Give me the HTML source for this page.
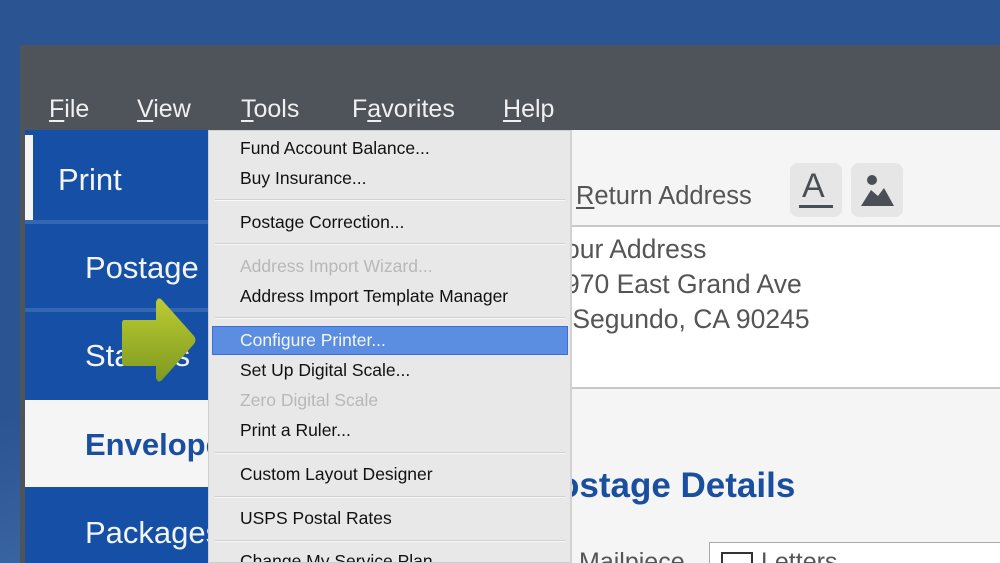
<!DOCTYPE html>
<html><head><style>
*{margin:0;padding:0;box-sizing:border-box}
html,body{width:1000px;height:563px;overflow:hidden}
body{position:relative;font-family:"Liberation Sans",sans-serif;background:linear-gradient(160deg,#2a5492 0%,#2a5492 45%,#5a8ac4 100%)}
.win{position:absolute;left:20px;top:45px;width:980px;height:518px;background:#4f545a}
.menu span{position:absolute;top:95px;color:#f0f0f0;font-size:25px}
.side{position:absolute;left:25px;top:130px;width:184px;height:433px;background:#1650a6;overflow:hidden}
.si{position:absolute;left:0;color:#f2f4f8;font-size:31px;white-space:nowrap}
.sep{position:absolute;left:0;width:184px;height:4px;background:#3367b2}
.content{position:absolute;left:570px;top:130px;width:430px;height:433px;background:#f5f5f5;border-left:1px solid #ccc;overflow:hidden}
.dd{position:absolute;left:208px;top:130px;width:364px;height:433px;background:#e8e8e8;border:1px solid #cfcfcf;border-right:2px solid #d2d2d2;overflow:hidden}
.it{position:absolute;left:31px;font-size:17.5px;color:#111;white-space:nowrap}
.dis{color:#b8b8b8}
.hr{position:absolute;left:6px;width:350px;height:2px;background:#d0d0d0;border-bottom:1px solid #f8f8f8}
u{text-decoration:underline;text-underline-offset:3px}
</style></head><body>
<div class="win"></div>
<div class="menu">
<span style="left:49px"><u>F</u>ile</span>
<span style="left:137px"><u>V</u>iew</span>
<span style="left:241px"><u>T</u>ools</span>
<span style="left:352px">F<u>a</u>vorites</span>
<span style="left:503px"><u>H</u>elp</span>
</div>
<div class="side">
<div style="position:absolute;left:0;top:5px;width:8px;height:88px;background:#f5f5f5"></div>
<div class="si" style="left:33px;top:32px">Print</div>
<div class="sep" style="top:90px"></div>
<div class="si" style="left:60px;top:120px">Postage</div>
<div class="sep" style="top:178px"></div>
<div class="si" style="left:60px;top:208px">Stamps</div>
<div style="position:absolute;left:0;top:270px;width:184px;height:87px;background:#f5f5f5"></div>
<div class="si" style="left:60px;top:297px;color:#1a4fa0;font-weight:bold">Envelopes</div>
<div class="si" style="left:60px;top:385px">Packages</div>
</div>
<div class="content">
<div style="position:absolute;left:5px;top:52px;font-size:25.5px;color:#555"><u>R</u>eturn Address</div>
<div style="position:absolute;left:219px;top:33px;width:52px;height:54px;background:#e6e6e6;border-radius:8px">
<div style="position:absolute;left:12px;top:4px;font-size:34px;color:#4a4f55">A</div>
<div style="position:absolute;left:9px;top:42px;width:34px;height:3px;background:#4a4f55"></div></div>
<div style="position:absolute;left:280px;top:33px;width:52px;height:54px;background:#e6e6e6;border-radius:8px">
<svg width="52" height="54"><circle cx="21" cy="17" r="5" fill="#4a4f55"/><path d="M10 43 L20 27 L27 33 L33 25 L43 43 Z" fill="#4a4f55"/></svg></div>
<div style="position:absolute;left:0;top:95px;width:430px;height:164px;background:#fff;border-top:2px solid #c8c8c8;border-bottom:2px solid #c8c8c8"></div>
<div style="position:absolute;left:-6px;top:102px;font-size:26.5px;color:#555;line-height:35px;white-space:nowrap">our Address<br>970 East Grand Ave<br>&nbsp;Segundo, CA 90245</div>
<div style="position:absolute;left:-13px;top:336px;font-size:35px;font-weight:bold;color:#1a4fa0;white-space:nowrap">ostage Details</div>
<div style="position:absolute;left:8px;top:418px;font-size:25px;color:#555">Mailpiece</div>
<div style="position:absolute;left:138px;top:412px;width:300px;height:40px;background:#fff;border:1px solid #aaa"></div>
<div style="position:absolute;left:150px;top:422px;width:32px;height:20px;border:2px solid #333"></div>
<div style="position:absolute;left:190px;top:418px;font-size:25px;color:#555">Letters</div>
</div>
<div class="dd">
<div class="it" style="top:7px">Fund Account Balance...</div>
<div class="it" style="top:37px">Buy Insurance...</div>
<div class="hr" style="top:68px"></div>
<div class="it" style="top:81px">Postage Correction...</div>
<div class="hr" style="top:112px"></div>
<div class="it dis" style="top:125px">Address Import Wizard...</div>
<div class="it" style="top:155px">Address Import Template Manager</div>
<div class="hr" style="top:186px"></div>
<div style="position:absolute;left:3px;top:195px;width:356px;height:29px;background:#5b8de0;border:1px solid #3a6fe0"></div>
<div class="it" style="top:199px;color:#f4f6fa">Configure Printer...</div>
<div class="it" style="top:229px">Set Up Digital Scale...</div>
<div class="it dis" style="top:259px">Zero Digital Scale</div>
<div class="it" style="top:289px">Print a Ruler...</div>
<div class="hr" style="top:321px"></div>
<div class="it" style="top:333px">Custom Layout Designer</div>
<div class="hr" style="top:365px"></div>
<div class="it" style="top:377px">USPS Postal Rates</div>
<div class="hr" style="top:409px"></div>
<div class="it" style="top:420px">Change My Service Plan</div>
</div>
<svg style="position:absolute;left:118px;top:294px" width="84" height="92"><defs><linearGradient id="g" x1="0" y1="0" x2="0" y2="1"><stop offset="0" stop-color="#bccb30"/><stop offset="1" stop-color="#7e9a22"/></linearGradient></defs>
<path d="M6 26 Q4 26 4 30 L4 68 Q4 72 8 72 L38 72 L38 84 Q40 90 44 86 L76 50 Q79 46 76 42 L44 6 Q40 2 38 8 L38 26 Z" fill="url(#g)"/></svg>
</body></html>
